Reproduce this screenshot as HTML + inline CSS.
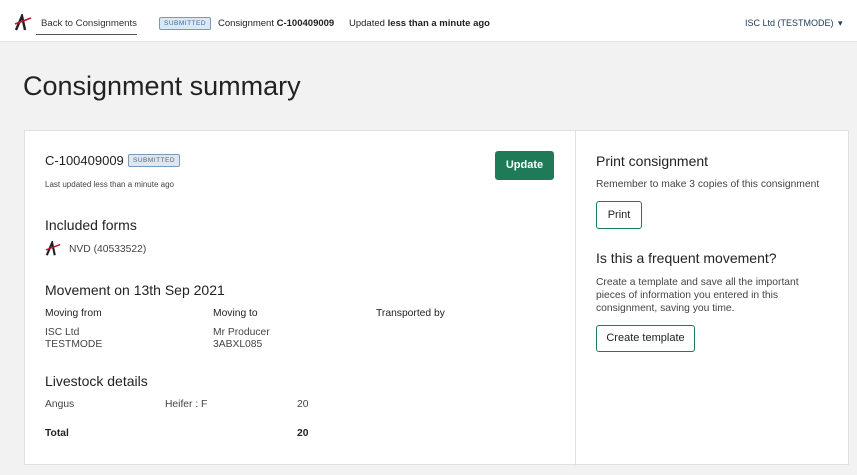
<!DOCTYPE html>
<html><head><style>
*{margin:0;padding:0;box-sizing:border-box}
body{width:857px;height:475px;overflow:hidden;background:#f2f2f2;font-family:"Liberation Sans",sans-serif;color:#222;position:relative}
.a{position:absolute;white-space:nowrap}
.top{position:absolute;left:0;top:0;width:857px;height:42px;background:#fff;border-bottom:1px solid #e4e4e4}
.badge{border:1px solid #7a9ab8;background:#dce7f2;color:#4a6a8a;font-size:6.5px;letter-spacing:.5px;padding:2px 4px;border-radius:2px}
.card{position:absolute;left:24px;top:130px;width:825px;height:335px;background:#fff;border:1px solid #e0e0e0}
.btn{position:absolute;border:1.5px solid #1e7a57;border-radius:3px;background:#fff;font-size:11px;color:#222;text-align:center}
.s{font-size:10.3px;color:#444}
h2{font-weight:normal;font-size:14px;color:#222}
</style></head><body>
<div class="top">
<svg class="a" style="left:14px;top:14px" width="18" height="18" viewBox="0 0 18 18"><path d="M2 16 L8 2 L11 16" stroke="#222" stroke-width="2.4" fill="none"/><path d="M1 10 L17 4" stroke="#c8102e" stroke-width="1.6"/></svg>
<div class="a" style="left:41px;top:18px;font-size:9.6px;color:#333">Back to Consignments</div>
<div class="a" style="left:36px;top:34px;width:101px;border-top:1px solid #555"></div>
<div class="a badge" style="left:159px;top:17px">SUBMITTED</div>
<div class="a" style="left:218px;top:18px;font-size:9.5px">Consignment <b>C-100409009</b></div>
<div class="a" style="left:349px;top:18px;font-size:9.5px">Updated <b>less than a minute ago</b></div>
<div class="a" style="left:745px;top:18px;font-size:9px;color:#1d3b5a">ISC Ltd (TESTMODE)</div>
<div class="a" style="left:838px;top:18px;font-size:9px;color:#1d3b5a">▾</div>
</div>
<div class="a" style="left:23px;top:71px;font-size:27px;color:#222">Consignment summary</div>
<div class="card">
<div class="a" style="left:550px;top:0;height:335px;border-left:1px solid #e0e0e0"></div>
<div class="a" style="left:20px;top:22px;font-size:13px">C-100409009</div>
<div class="a badge" style="left:103px;top:23px">SUBMITTED</div>
<div class="a" style="left:20px;top:49px;font-size:8px;color:#444">Last updated less than a minute ago</div>
<div class="btn" style="left:470px;top:20px;width:59px;height:29px;line-height:27px;background:#1e7a57;color:#fff;font-weight:bold">Update</div>
<h2 class="a" style="left:20px;top:86px">Included forms</h2>
<svg class="a" style="left:20px;top:110px" width="16" height="16" viewBox="0 0 18 18"><path d="M2 16 L8 2 L11 16" stroke="#222" stroke-width="2.4" fill="none"/><path d="M1 10 L17 4" stroke="#c8102e" stroke-width="1.6"/></svg>
<div class="a s" style="left:44px;top:113px">NVD (40533522)</div>
<h2 class="a" style="left:20px;top:151px">Movement on 13th Sep 2021</h2>
<div class="a s" style="left:20px;top:177px;color:#222">Moving from</div>
<div class="a s" style="left:188px;top:177px;color:#222">Moving to</div>
<div class="a s" style="left:351px;top:177px;color:#222">Transported by</div>
<div class="a s" style="left:20px;top:196px;line-height:12px">ISC Ltd<br>TESTMODE</div>
<div class="a s" style="left:188px;top:196px;line-height:12px">Mr Producer<br>3ABXL085</div>
<h2 class="a" style="left:20px;top:242px">Livestock details</h2>
<div class="a s" style="left:20px;top:268px">Angus</div>
<div class="a s" style="left:140px;top:268px">Heifer : F</div>
<div class="a s" style="left:272px;top:268px">20</div>
<div class="a s" style="left:20px;top:297px;font-weight:bold;color:#222">Total</div>
<div class="a s" style="left:272px;top:297px;font-weight:bold;color:#222">20</div>
<h2 class="a" style="left:571px;top:22px">Print consignment</h2>
<div class="a s" style="left:571px;top:48px">Remember to make 3 copies of this consignment</div>
<div class="btn" style="left:571px;top:70px;width:46px;height:28px;line-height:26px">Print</div>
<h2 class="a" style="left:571px;top:119px">Is this a frequent movement?</h2>
<div class="a s" style="left:571px;top:145px;line-height:13px">Create a template and save all the important<br>pieces of information you entered in this<br>consignment, saving you time.</div>
<div class="btn" style="left:571px;top:194px;width:99px;height:27px;line-height:25px">Create template</div>
</div>
</body></html>
